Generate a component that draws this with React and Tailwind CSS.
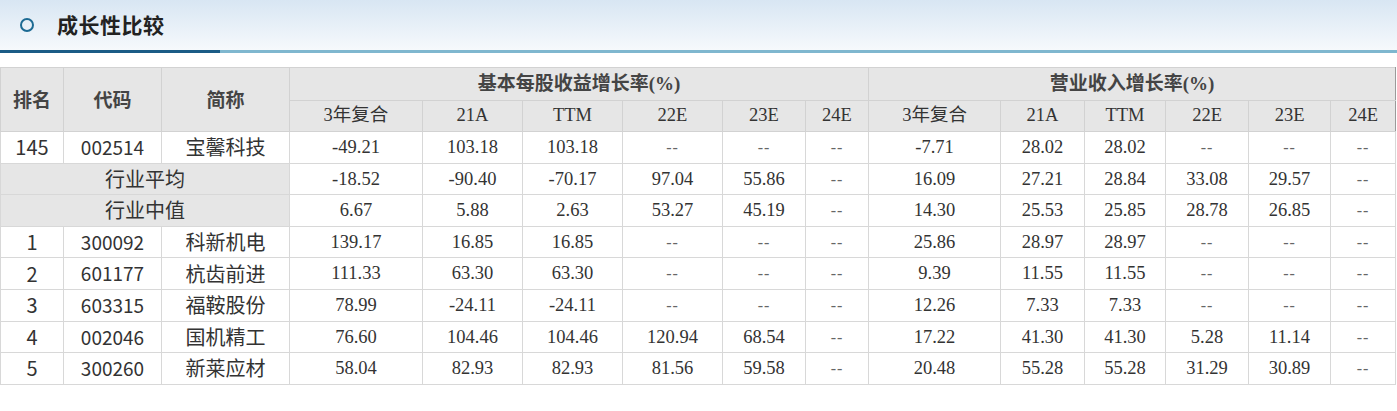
import React from "react";

const widths = [63, 98, 128, 133, 100, 100, 100, 83, 63, 132, 84, 81, 83, 82, 65];
const subHeads = ["3年复合", "21A", "TTM", "22E", "23E", "24E"];

const rows = [
  { type: "stock", rank: "145", code: "002514", name: "宝馨科技", vals: ["-49.21", "103.18", "103.18", "--", "--", "--", "-7.71", "28.02", "28.02", "--", "--", "--"] },
  { type: "agg", label: "行业平均", vals: ["-18.52", "-90.40", "-70.17", "97.04", "55.86", "--", "16.09", "27.21", "28.84", "33.08", "29.57", "--"] },
  { type: "agg", label: "行业中值", vals: ["6.67", "5.88", "2.63", "53.27", "45.19", "--", "14.30", "25.53", "25.85", "28.78", "26.85", "--"] },
  { type: "stock", rank: "1", code: "300092", name: "科新机电", vals: ["139.17", "16.85", "16.85", "--", "--", "--", "25.86", "28.97", "28.97", "--", "--", "--"] },
  { type: "stock", rank: "2", code: "601177", name: "杭齿前进", vals: ["111.33", "63.30", "63.30", "--", "--", "--", "9.39", "11.55", "11.55", "--", "--", "--"] },
  { type: "stock", rank: "3", code: "603315", name: "福鞍股份", vals: ["78.99", "-24.11", "-24.11", "--", "--", "--", "12.26", "7.33", "7.33", "--", "--", "--"] },
  { type: "stock", rank: "4", code: "002046", name: "国机精工", vals: ["76.60", "104.46", "104.46", "120.94", "68.54", "--", "17.22", "41.30", "41.30", "5.28", "11.14", "--"] },
  { type: "stock", rank: "5", code: "300260", name: "新莱应材", vals: ["58.04", "82.93", "82.93", "81.56", "59.58", "--", "20.48", "55.28", "55.28", "31.29", "30.89", "--"] },
];

const sans = { fontFamily: '"Noto Sans CJK SC", "Noto Sans", sans-serif' };
const serif = { fontFamily: '"Liberation Serif", "Noto Sans CJK SC", serif' };

function Val({ v }) {
  if (v === "--") {
    return <span className="text-[16px] text-[#666] tracking-[1px]">--</span>;
  }
  return <span>{v}</span>;
}

export default function App() {
  return (
    <div className="w-[1397px] h-[411px] bg-white overflow-hidden">
      <div className="h-[50px] bg-gradient-to-b from-[#d8e6f3] to-[#f6f9fc] flex items-center">
        <div className="ml-[20px] w-[14px] h-[14px] rounded-full border-[2.5px] border-[#1c6a93]" />
        <div
          className="ml-[23px] text-[21px] font-bold text-[#222] tracking-[0.5px]"
          style={sans}
        >
          成长性比较
        </div>
      </div>
      <div className="flex h-[3px]">
        <div className="w-[220px] bg-[#1b5c86]" />
        <div className="flex-1 bg-[#7fb7cf]" />
      </div>
      <div className="h-[14px]" />
      <table
        className="table-fixed border-collapse w-[1396px] text-[#333]"
        style={serif}
      >
        <colgroup>
          {widths.map((w, i) => (
            <col key={i} style={{ width: w }} />
          ))}
        </colgroup>
        <thead>
          <tr className="h-[33px] bg-[#e6e6e6]">
            <th rowSpan={2} className="border border-[#d2d2d2] text-[19px] font-bold text-[#444]" style={sans}>排名</th>
            <th rowSpan={2} className="border border-[#d2d2d2] text-[19px] font-bold text-[#444]" style={sans}>代码</th>
            <th rowSpan={2} className="border border-[#d2d2d2] text-[19px] font-bold text-[#444]" style={sans}>简称</th>
            <th colSpan={6} className="border border-[#d2d2d2] text-[19px] font-bold text-[#444]">基本每股收益增长率(%)</th>
            <th colSpan={6} className="border border-[#d2d2d2] border-r-[#9a9a9a] text-[19px] font-bold text-[#444]">营业收入增长率(%)</th>
          </tr>
          <tr className="h-[31px] bg-[#e6e6e6]">
            {[...subHeads, ...subHeads].map((h, i) => (
              <th
                key={i}
                className={`border border-[#d2d2d2] text-[18.5px] font-normal text-[#333] ${i === 11 ? "border-r-[#9a9a9a]" : ""}`}
              >
                {h}
              </th>
            ))}
          </tr>
        </thead>
        <tbody>
          {rows.map((r, ri) => (
            <tr key={ri} className="h-[31.6px]">
              {r.type === "stock" ? (
                <>
                  <td className="border border-[#d8d8d8] text-center text-[20px]" style={sans}>{r.rank}</td>
                  <td className="border border-[#d8d8d8] text-center text-[19px]" style={sans}>{r.code}</td>
                  <td className="border border-[#d8d8d8] text-center text-[20px]" style={sans}>{r.name}</td>
                </>
              ) : (
                <td colSpan={3} className="border border-[#d8d8d8] bg-[#e6e6e6] text-center text-[20px]" style={sans}>
                  {r.label}
                </td>
              )}
              {r.vals.map((v, vi) => (
                <td
                  key={vi}
                  className="border border-[#d8d8d8] text-center text-[18.5px] leading-none"
                >
                  <Val v={v} />
                </td>
              ))}
            </tr>
          ))}
        </tbody>
      </table>
    </div>
  );
}
